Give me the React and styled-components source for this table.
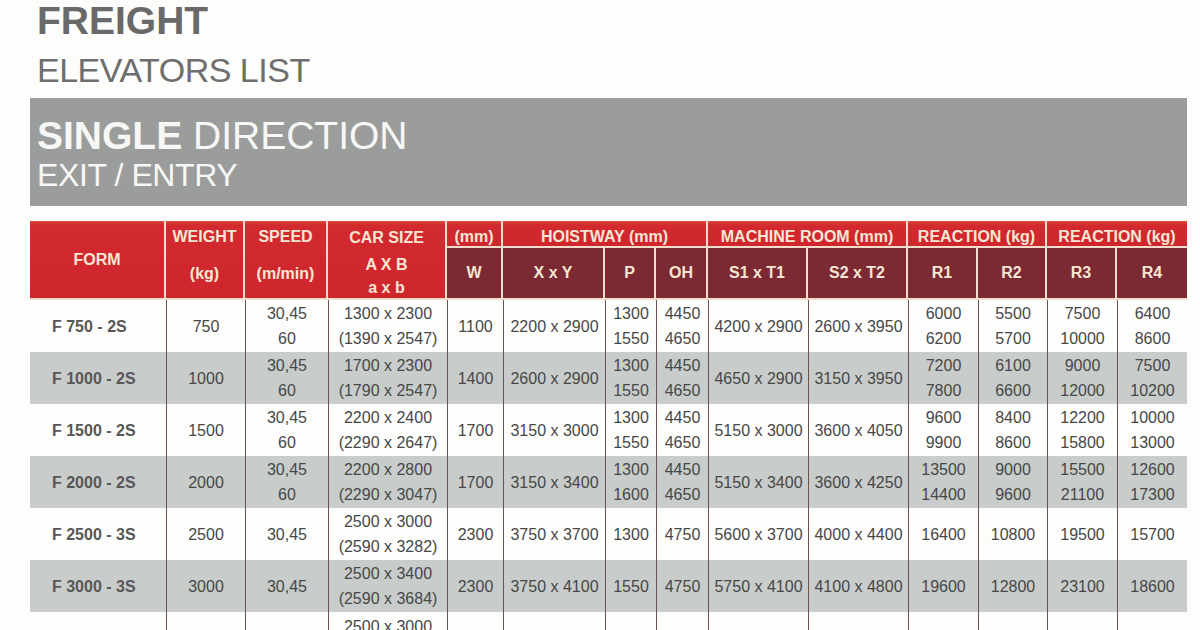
import React from "react";
import styled, { createGlobalStyle } from "styled-components";

const Global = createGlobalStyle`
  html, body { margin: 0; padding: 0; overflow: hidden; background: #fdfdfc; }
  body { font-family: "Liberation Sans", Arial, sans-serif; width: 1200px; height: 630px; }
`;

const Page = styled.div`
  width: 1200px;
  height: 630px;
  overflow: hidden;
  padding-left: 30px;
  box-sizing: border-box;
`;

const TitleBlock = styled.div`
  padding-left: 7px;
  color: #696969;
`;

const Title = styled.div`
  font-size: 39px;
  font-weight: bold;
  line-height: 40px;
  padding-top: 1px;
`;

const Subtitle = styled.div`
  font-size: 34px;
  letter-spacing: -0.5px;
  line-height: 36px;
  margin-top: 11px;
  color: #6e6e6e;
`;

const Banner = styled.div`
  margin-top: 10px;
  width: 1157px;
  height: 108px;
  box-sizing: border-box;
  background: #9b9d9c;
  color: #f7f7f5;
  padding: 18px 0 0 7px;
`;

const BannerMain = styled.div`
  font-size: 39px;
  line-height: 40px;
  b { font-weight: bold; }
`;

const BannerSub = styled.div`
  font-size: 32px;
  letter-spacing: -0.4px;
  line-height: 38px;
`;

const Table = styled.table`
  margin-top: 15px;
  width: 1157px;
  table-layout: fixed;
  border-collapse: separate;
  border-spacing: 0;
  font-size: 16px;
`;

const HeadCell = styled.th`
  padding: 0;
  font-weight: bold;
  color: #f5e6d4;
  text-align: center;
  vertical-align: middle;
  background: ${(p) =>
    p.$dark
      ? "#7b2932"
      : "linear-gradient(#dc4b3e 0, #d32a30 4px, #cf262e 100%)"};
  border-right: ${(p) => (p.$last ? "none" : "2px solid #f2ddcd")};
  border-bottom: 2px solid #f2ddcd;
  white-space: nowrap;
`;

const GroupText = styled.div`
  height: 25px;
  line-height: 25px;
  padding-top: 3px;
  box-sizing: border-box;
`;

const SubText = styled.div`
  height: 50px;
  line-height: 50px;
`;

const Stack = styled.div`
  height: 77px;
  display: grid;
  grid-template-rows: ${(p) => p.$rows};
  align-items: center;
  padding-top: 3px;
  box-sizing: border-box;
`;

const Row = styled.tr`
  height: 52px;
  background: ${(p) => (p.$grey ? "#c8cccb" : "#fdfdfc")};
`;

const Cell = styled.td`
  padding: 0;
  height: 52px;
  color: #474747;
  text-align: ${(p) => (p.$left ? "left" : "center")};
  padding-left: ${(p) => (p.$left ? "22px" : "0")};
  font-weight: ${(p) => (p.$left ? "bold" : "normal")};
  ${(p) => (p.$left ? "color: #575757;" : "")}
  vertical-align: ${(p) => (p.$top ? "top" : "middle")};
  ${(p) => (p.$top ? "padding-top: 2px;" : "")}
  line-height: 25px;
  white-space: nowrap;
  border-left: ${(p) => (p.$left ? "none" : "1px solid #6d5050")};
`;

const Line = styled.div`
  line-height: 25px;
`;

const cols = [136, 79, 83, 119, 56, 102, 51, 52, 100, 100, 70, 69, 70, 70];

const rows = [
  ["F 750 - 2S", "750", "30,45|60", "1300 x 2300|(1390 x 2547)", "1100", "2200 x 2900", "1300|1550", "4450|4650", "4200 x 2900", "2600 x 3950", "6000|6200", "5500|5700", "7500|10000", "6400|8600"],
  ["F 1000 - 2S", "1000", "30,45|60", "1700 x 2300|(1790 x 2547)", "1400", "2600 x 2900", "1300|1550", "4450|4650", "4650 x 2900", "3150 x 3950", "7200|7800", "6100|6600", "9000|12000", "7500|10200"],
  ["F 1500 - 2S", "1500", "30,45|60", "2200 x 2400|(2290 x 2647)", "1700", "3150 x 3000", "1300|1550", "4450|4650", "5150 x 3000", "3600 x 4050", "9600|9900", "8400|8600", "12200|15800", "10000|13000"],
  ["F 2000 - 2S", "2000", "30,45|60", "2200 x 2800|(2290 x 3047)", "1700", "3150 x 3400", "1300|1600", "4450|4650", "5150 x 3400", "3600 x 4250", "13500|14400", "9000|9600", "15500|21100", "12600|17300"],
  ["F 2500 - 3S", "2500", "30,45", "2500 x 3000|(2590 x 3282)", "2300", "3750 x 3700", "1300", "4750", "5600 x 3700", "4000 x 4400", "16400", "10800", "19500", "15700"],
  ["F 3000 - 3S", "3000", "30,45", "2500 x 3400|(2590 x 3684)", "2300", "3750 x 4100", "1550", "4750", "5750 x 4100", "4100 x 4800", "19600", "12800", "23100", "18600"],
];

const lastRow = ["", "", "", "2500 x 3000", "", "", "", "", "", "", "", "", "", ""];

const subHeads = ["W", "X x Y", "P", "OH", "S1 x T1", "S2 x T2", "R1", "R2", "R3", "R4"];

export default function App() {
  return (
    <>
      <Global />
      <Page>
        <TitleBlock>
          <Title>FREIGHT</Title>
          <Subtitle>ELEVATORS LIST</Subtitle>
        </TitleBlock>
        <Banner>
          <BannerMain>
            <b>SINGLE</b> DIRECTION
          </BannerMain>
          <BannerSub>EXIT / ENTRY</BannerSub>
        </Banner>
        <Table>
          <colgroup>
            {cols.map((w, i) => (
              <col key={i} style={{ width: w }} />
            ))}
          </colgroup>
          <thead>
            <tr style={{ height: 27 }}>
              <HeadCell rowSpan={2}>FORM</HeadCell>
              <HeadCell rowSpan={2}>
                <Stack $rows="25px 1fr">
                  <div>WEIGHT</div>
                  <div>(kg)</div>
                </Stack>
              </HeadCell>
              <HeadCell rowSpan={2}>
                <Stack $rows="25px 1fr">
                  <div>SPEED</div>
                  <div>(m/min)</div>
                </Stack>
              </HeadCell>
              <HeadCell rowSpan={2}>
                <Stack $rows="27px 27px 1fr">
                  <div>CAR SIZE</div>
                  <div>A X B</div>
                  <div>a x b</div>
                </Stack>
              </HeadCell>
              <HeadCell>
                <GroupText>(mm)</GroupText>
              </HeadCell>
              <HeadCell colSpan={3}>
                <GroupText>HOISTWAY (mm)</GroupText>
              </HeadCell>
              <HeadCell colSpan={2}>
                <GroupText>MACHINE ROOM (mm)</GroupText>
              </HeadCell>
              <HeadCell colSpan={2}>
                <GroupText>REACTION (kg)</GroupText>
              </HeadCell>
              <HeadCell colSpan={2} $last>
                <GroupText>REACTION (kg)</GroupText>
              </HeadCell>
            </tr>
            <tr style={{ height: 52 }}>
              {subHeads.map((h, i) => (
                <HeadCell key={h} $dark $last={i === subHeads.length - 1}>
                  <SubText>{h}</SubText>
                </HeadCell>
              ))}
            </tr>
          </thead>
          <tbody>
            {rows.map((r, ri) => (
              <Row key={ri} $grey={ri % 2 === 1}>
                {r.map((c, ci) => (
                  <Cell key={ci} $left={ci === 0}>
                    {c.split("|").map((l, li) => (
                      <Line key={li}>{l}</Line>
                    ))}
                  </Cell>
                ))}
              </Row>
            ))}
            <Row>
              {lastRow.map((c, ci) => (
                <Cell key={ci} $left={ci === 0} $top>
                  {c}
                </Cell>
              ))}
            </Row>
          </tbody>
        </Table>
      </Page>
    </>
  );
}
